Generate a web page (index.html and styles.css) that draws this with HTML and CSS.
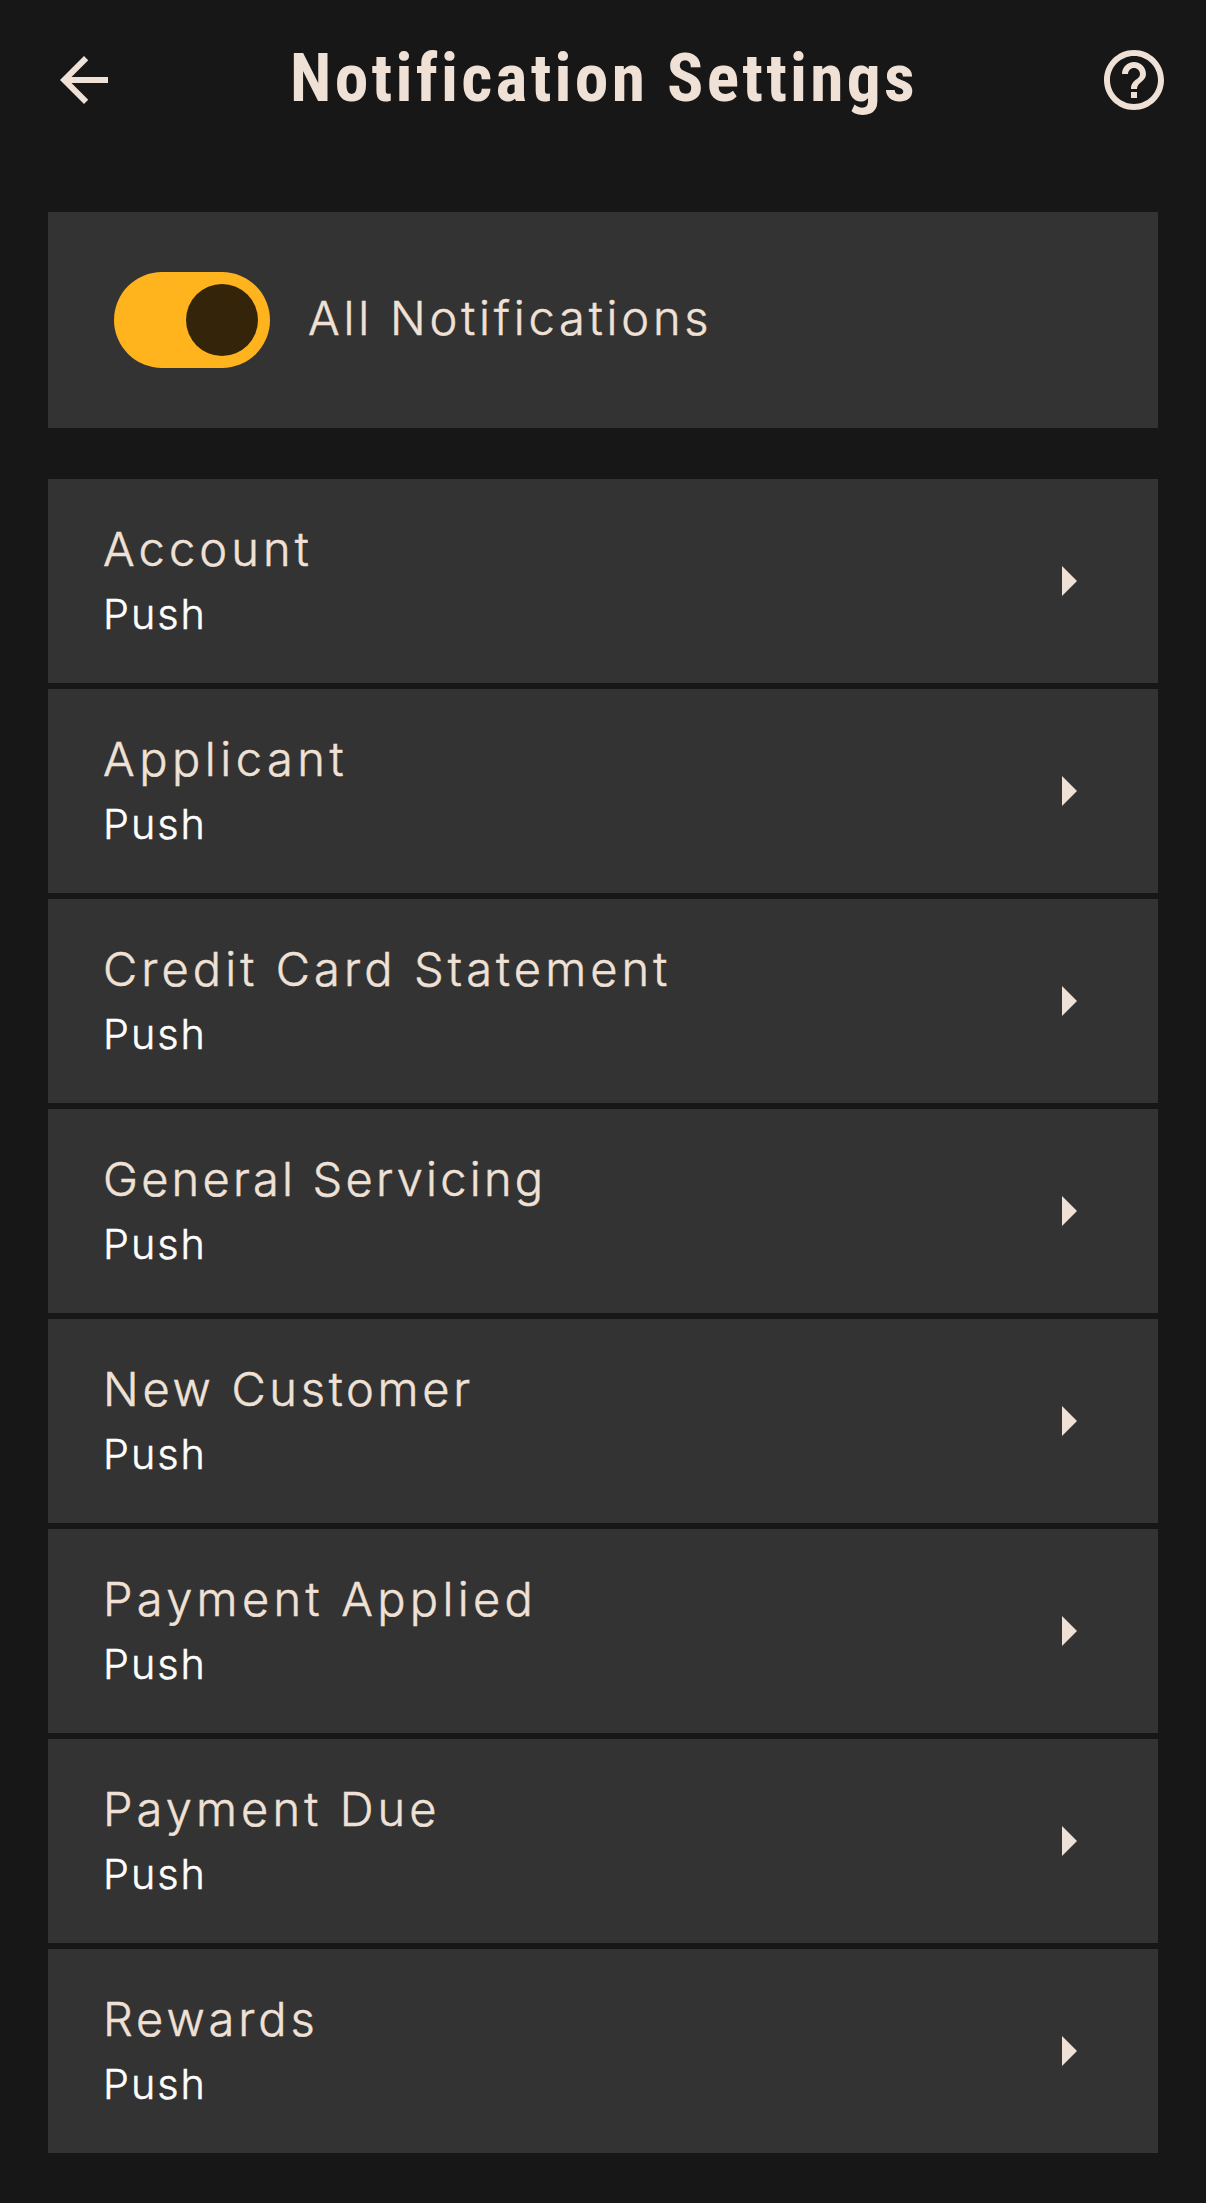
FILE: index.html
```html
<!DOCTYPE html>
<html lang="en">

<head>
    <meta charset="UTF-8">
    <meta name="viewport" content="width=device-width, initial-scale=1.0">
    <title>Notification Settings</title>
    <link rel="stylesheet" href="styles.css">
</head>

<body>

    <header class="header">
        <svg class="icon" viewBox="0 0 24 24">
            <path d="M20 11H7.83l5.59-5.59L12 4l-8 8 8 8 1.41-1.41L7.83 13H20v-2z" />
        </svg>
        <h1>Notification Settings</h1>
        <svg class="icon" viewBox="0 0 24 24">
            <path d="M11 18h2v-2h-2v2zm1-16C6.48 2 2 6.48 2 12s4.480 10 10 10 10-4.480 10-10S17.520 2 12 2zm0 18c-4.410 0-8-3.590-8-8s3.590-8 8-8 8 3.590 8 8-3.590 8-8 8zm0-14c-2.210 0-4 1.790-4 4h2c0-1.100.9-2 2-2s2 .9 2 2c0 2-3 1.750-3 5h2c0-2.250 3-2.500 3-5 0-2.210-1.790-4-4-4z" />
        </svg>
    </header>

    <main>
        <div class="all">
            <div class="toggle">
                <div class="knob"></div>
            </div>
            <p class="name">All Notifications</p>
        </div>

        <div class="list">
            <div class="row account">
                <div class="text">
                    <p class="name">Account</p>
                    <p class="type">Push</p>
                </div>
                <svg class="icon" viewBox="0 0 24 24"><path d="M10 17l5-5-5-5v10z" /></svg>
            </div>
            <div class="row applicant">
                <div class="text">
                    <p class="name">Applicant</p>
                    <p class="type">Push</p>
                </div>
                <svg class="icon" viewBox="0 0 24 24"><path d="M10 17l5-5-5-5v10z" /></svg>
            </div>
            <div class="row statement">
                <div class="text">
                    <p class="name">Credit Card Statement</p>
                    <p class="type">Push</p>
                </div>
                <svg class="icon" viewBox="0 0 24 24"><path d="M10 17l5-5-5-5v10z" /></svg>
            </div>
            <div class="row general">
                <div class="text">
                    <p class="name">General Servicing</p>
                    <p class="type">Push</p>
                </div>
                <svg class="icon" viewBox="0 0 24 24"><path d="M10 17l5-5-5-5v10z" /></svg>
            </div>
            <div class="row customer">
                <div class="text">
                    <p class="name">New Customer</p>
                    <p class="type">Push</p>
                </div>
                <svg class="icon" viewBox="0 0 24 24"><path d="M10 17l5-5-5-5v10z" /></svg>
            </div>
            <div class="row applied">
                <div class="text">
                    <p class="name">Payment Applied</p>
                    <p class="type">Push</p>
                </div>
                <svg class="icon" viewBox="0 0 24 24"><path d="M10 17l5-5-5-5v10z" /></svg>
            </div>
            <div class="row due">
                <div class="text">
                    <p class="name">Payment Due</p>
                    <p class="type">Push</p>
                </div>
                <svg class="icon" viewBox="0 0 24 24"><path d="M10 17l5-5-5-5v10z" /></svg>
            </div>
            <div class="row rewards">
                <div class="text">
                    <p class="name">Rewards</p>
                    <p class="type">Push</p>
                </div>
                <svg class="icon" viewBox="0 0 24 24"><path d="M10 17l5-5-5-5v10z" /></svg>
            </div>
        </div>
    </main>

</body>

</html>
```
FILE: styles.css
```css
body {
    margin: 0;
    min-height: 100vh;
    background-color: #171717;
    color: #f0e1d6;
    font-family: Inter, "Liberation Sans", sans-serif;
}

p,
h1 {
    margin: 0;
}

.header {
    display: flex;
    align-items: center;
    justify-content: space-between;
    height: 72px;
    padding: 44px 36px 96px 48px;
}

.header h1 {
    padding: 0 10px 4px 0;
    font-family: "Roboto Condensed", Roboto, sans-serif;
    font-size: 67.5px;
    font-weight: 700;
    line-height: 68px;
    letter-spacing: 3.25px;
    white-space: nowrap;
}

.icon {
    display: block;
    flex: none;
    width: 72px;
    height: 72px;
    fill: #f0e1d6;
}

main {
    padding: 0 48px;
}

.all {
    display: flex;
    align-items: center;
    gap: 38px;
    box-sizing: border-box;
    height: 216px;
    padding-left: 66px;
    margin-bottom: 51px;
    background-color: #333333;
}

.toggle {
    display: flex;
    align-items: center;
    justify-content: flex-end;
    box-sizing: border-box;
    width: 156px;
    height: 96px;
    padding: 12px;
    border-radius: 48px;
    background-color: #ffb41d;
}

.knob {
    width: 72px;
    height: 72px;
    border-radius: 50%;
    background-color: #33240a;
}

.list {
    display: flex;
    flex-direction: column;
    gap: 6px;
}

.row {
    display: flex;
    align-items: center;
    justify-content: space-between;
    box-sizing: border-box;
    height: 204px;
    padding: 0 54px 0 55px;
    background-color: #333333;
}

.text {
    padding-top: 6px;
}

.name,
.type {
    font-weight: 300;
    -webkit-text-stroke: 0.5px;
}

.name {
    font-size: 47px;
    line-height: 60px;
    letter-spacing: 4.1px;
}

.type {
    color: #ffffff;
    font-size: 41.3px;
    line-height: 70px;
    letter-spacing: 2px;
}

.all .name {
    padding-bottom: 4px;
    letter-spacing: 3.8px;
}

.applicant .name {
    letter-spacing: 4.5px;
}

.general .name {
    letter-spacing: 3.2px;
}

.customer .name {
    letter-spacing: 3.7px;
}

.applied .name {
    letter-spacing: 4.3px;
}

.rewards .name {
    letter-spacing: 3.9px;
}
```
